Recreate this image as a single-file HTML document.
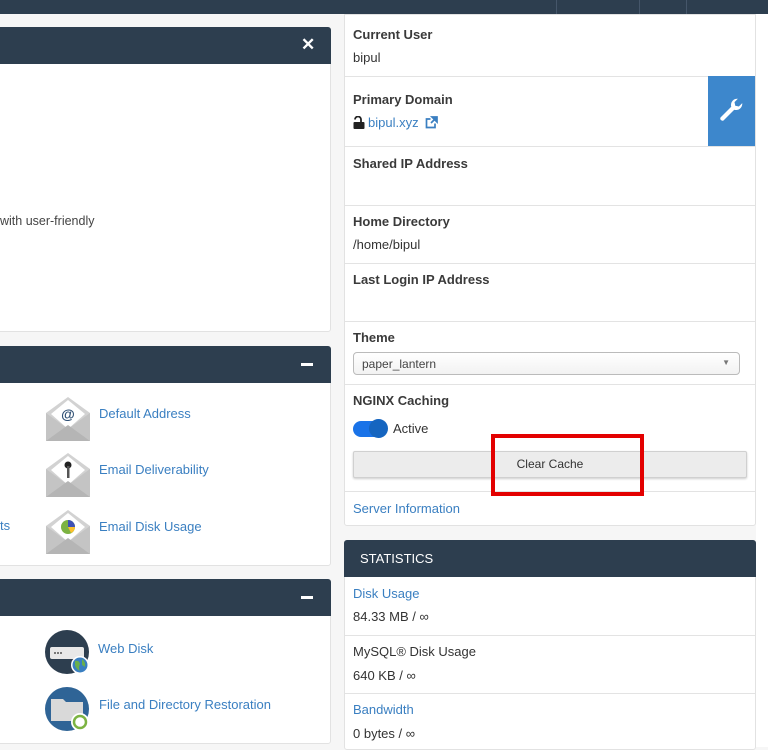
<!DOCTYPE html>
<html><head><style>
*{box-sizing:border-box;margin:0;padding:0}
body{width:768px;height:747px;overflow:hidden;background:#f6f6f6;font-family:"Liberation Sans",sans-serif;font-size:13px;color:#333;position:relative}
.abs{position:absolute}
.hdr{background:#2d3e4f;color:#fff}
.panel{background:#fff;border:1px solid #e2e2e2;border-radius:3px}
a{color:#3a7fc1;text-decoration:none}
.lbl{font-weight:bold;color:#3a3a3a;font-size:13px}
.sep{position:absolute;left:0;right:0;height:1px;background:#e3e3e3}
.ic{position:absolute;width:46px;height:46px}
</style></head><body>
<div class="abs hdr" style="left:0;top:0;width:768px;height:14px"></div>
<div class="abs" style="left:556px;top:0;width:1px;height:14px;background:#45566a"></div>
<div class="abs" style="left:639px;top:0;width:1px;height:14px;background:#45566a"></div>
<div class="abs" style="left:686px;top:0;width:1px;height:14px;background:#45566a"></div>
<div class="abs" style="left:756px;top:14px;width:12px;height:733px;background:#fff"></div>

<svg width="0" height="0" style="position:absolute"><defs>
<g id="env"><path d="M1 17 L23 1 L45 17 L45 45 L1 45Z" fill="#d2d2d2"/><path d="M23 4 L40 18 L23 33 L6 18Z" fill="#fff"/><path d="M1 17 L23 33 L1 45Z" fill="#c4c4c4"/><path d="M45 17 L23 33 L45 45Z" fill="#c4c4c4"/><path d="M1 45 L23 29 L45 45Z" fill="#b5b5b5"/></g>
</defs></svg>

<!-- left panel 1 -->
<div class="abs panel" style="left:-4px;top:27px;width:335px;height:305px"></div>
<div class="abs hdr" style="left:0;top:27px;width:331px;height:37px;border-radius:0 3px 0 0"></div>
<div class="abs" style="left:301px;top:35px;color:#fff;font-size:17px;font-weight:bold">✕</div>
<div class="abs" style="left:0;top:214px;font-size:12.5px;color:#444">with user-friendly</div>

<!-- left panel 2 -->
<div class="abs panel" style="left:-4px;top:346px;width:335px;height:220px"></div>
<div class="abs hdr" style="left:0;top:346px;width:331px;height:37px;border-radius:0 3px 0 0"></div>
<div class="abs" style="left:301px;top:363px;width:12px;height:3px;background:#fff"></div>
<div class="abs" style="left:0;top:518px;font-size:13px;color:#3a7fc1">ts</div>
<svg class="ic" style="left:45px;top:396px" viewBox="0 0 46 46"><use href="#env"/><text x="23" y="23" font-size="14" text-anchor="middle" fill="#2d4e73" font-weight="bold" font-family="Liberation Sans">@</text></svg>
<a class="abs" style="left:99px;top:406px">Default Address</a>
<svg class="ic" style="left:45px;top:452px" viewBox="0 0 46 46"><use href="#env"/><circle cx="23" cy="13" r="3.5" fill="#222"/><rect x="22" y="14" width="2.5" height="12" fill="#555"/></svg>
<a class="abs" style="left:99px;top:462px">Email Deliverability</a>
<svg class="ic" style="left:45px;top:509px" viewBox="0 0 46 46"><use href="#env"/><circle cx="23" cy="18" r="7" fill="#7cb342"/><path d="M23 18 L23 11 A7 7 0 0 1 30 18Z" fill="#3f51b5"/><path d="M23 18 L30 18 A7 7 0 0 1 26 24Z" fill="#fbc02d"/></svg>
<a class="abs" style="left:99px;top:519px">Email Disk Usage</a>

<!-- left panel 3 -->
<div class="abs panel" style="left:-4px;top:579px;width:335px;height:165px"></div>
<div class="abs hdr" style="left:0;top:579px;width:331px;height:37px;border-radius:0 3px 0 0"></div>
<div class="abs" style="left:301px;top:596px;width:12px;height:3px;background:#fff"></div>
<svg class="ic" style="left:45px;top:630px" viewBox="0 0 46 46"><circle cx="22" cy="22" r="22" fill="#2d3e4f"/><rect x="5" y="17" width="34" height="12" rx="2" fill="#e8e8e8"/><circle cx="10" cy="23" r="1" fill="#555"/><circle cx="13" cy="23" r="1" fill="#555"/><circle cx="16" cy="23" r="1" fill="#555"/><circle cx="35" cy="35" r="9" fill="#fff"/><circle cx="35" cy="35" r="7.5" fill="#3a7fc1"/><path d="M30 31 Q34 30 35 34 Q33 38 35 41 Q31 39 30 35Z M37 29 Q41 32 40 37 L37 35Z" fill="#6ab04c"/></svg>
<a class="abs" style="left:98px;top:641px">Web Disk</a>
<svg class="ic" style="left:45px;top:687px" viewBox="0 0 46 46"><circle cx="22" cy="22" r="22" fill="#2f6496"/><path d="M6 12 L18 12 L21 15 L38 15 L38 34 L6 34Z" fill="#d9d9d9"/><circle cx="35" cy="35" r="9" fill="#fff"/><circle cx="35" cy="35" r="6" fill="none" stroke="#7cb342" stroke-width="2.5"/></svg>
<a class="abs" style="left:99px;top:697px">File and Directory Restoration</a>

<!-- right info panel -->
<div class="abs panel" style="left:344px;top:14px;width:412px;height:512px;border-radius:0 0 3px 3px">
  <div class="sep" style="top:61px"></div>
  <div class="sep" style="top:131px"></div>
  <div class="sep" style="top:190px"></div>
  <div class="sep" style="top:248px"></div>
  <div class="sep" style="top:306px"></div>
  <div class="sep" style="top:369px"></div>
  <div class="sep" style="top:476px"></div>
</div>
<div class="abs lbl" style="left:353px;top:27px">Current User</div>
<div class="abs" style="left:353px;top:50px">bipul</div>
<div class="abs lbl" style="left:353px;top:92px">Primary Domain</div>
<svg class="abs" style="left:353px;top:116px" width="12" height="13" viewBox="0 0 12 13"><path d="M2 3.5 A3 3 0 0 1 8 3.5 L8 6" fill="none" stroke="#222" stroke-width="1.8"/><rect x="0.5" y="6" width="11" height="7" rx="1" fill="#222"/></svg>
<a class="abs" style="left:368px;top:115px">bipul.xyz</a>
<svg class="abs" style="left:425px;top:116px" width="13" height="13" viewBox="0 0 13 13"><path d="M10 7.5 V11.5 H1.5 V3 H5.5" fill="none" stroke="#3a7fc1" stroke-width="1.7"/><path d="M7 1 H12 V6 Z M11.5 1.5 L6 7" fill="#3a7fc1" stroke="#3a7fc1" stroke-width="1.7"/></svg>
<div class="abs" style="left:708px;top:76px;width:47px;height:70px;background:#3d87cc"></div>
<svg class="abs" style="left:716px;top:95px" width="30" height="30" viewBox="0 0 24 24"><path d="M21 6.5 A5 5 0 0 1 14.6 11.8 L6 20.4 A1.8 1.8 0 0 1 3.6 18 L12.2 9.4 A5 5 0 0 1 17.5 3 L14.8 5.7 L15.4 8.6 L18.3 9.2Z" fill="#fff"/></svg>
<div class="abs lbl" style="left:353px;top:156px">Shared IP Address</div>
<div class="abs lbl" style="left:353px;top:214px">Home Directory</div>
<div class="abs" style="left:353px;top:237px">/home/bipul</div>
<div class="abs lbl" style="left:353px;top:272px">Last Login IP Address</div>
<div class="abs lbl" style="left:353px;top:330px">Theme</div>
<div class="abs" style="left:353px;top:352px;width:387px;height:23px;border:1px solid #bbb;border-radius:4px;background:linear-gradient(#fff,#f2f2f2);font-size:12px;padding:4px 8px;color:#444">paper_lantern<span style="position:absolute;right:9px;top:5px;font-size:8px;color:#777">▼</span></div>
<div class="abs lbl" style="left:353px;top:393px">NGINX Caching</div>
<div class="abs" style="left:353px;top:421px;width:34px;height:16px;border-radius:8px;background:#1a73e8"></div>
<div class="abs" style="left:369px;top:419px;width:19px;height:19px;border-radius:50%;background:#1565c0"></div>
<div class="abs" style="left:393px;top:421px">Active</div>
<div class="abs" style="left:353px;top:451px;width:394px;height:27px;background:#ececec;border:1px solid #d0d0d0;border-radius:2px;box-shadow:0 1px 2px rgba(0,0,0,.2);text-align:center;font-size:12px;line-height:25px;color:#333">Clear Cache</div>
<div class="abs" style="left:491px;top:434px;width:153px;height:62px;border:4px solid #e30000"></div>
<a class="abs" style="left:353px;top:501px">Server Information</a>

<!-- statistics -->
<div class="abs panel" style="left:344px;top:540px;width:412px;height:210px">
  <div class="sep" style="top:94px"></div>
  <div class="sep" style="top:152px"></div>
</div>
<div class="abs hdr" style="left:344px;top:540px;width:412px;height:37px;border-radius:3px 3px 0 0;padding:11px 16px;font-size:13px">STATISTICS</div>
<a class="abs" style="left:353px;top:586px">Disk Usage</a>
<div class="abs" style="left:353px;top:609px">84.33 MB / ∞</div>
<div class="abs" style="left:353px;top:644px">MySQL® Disk Usage</div>
<div class="abs" style="left:353px;top:668px">640 KB / ∞</div>
<a class="abs" style="left:353px;top:702px">Bandwidth</a>
<div class="abs" style="left:353px;top:726px">0 bytes / ∞</div>
</body></html>
